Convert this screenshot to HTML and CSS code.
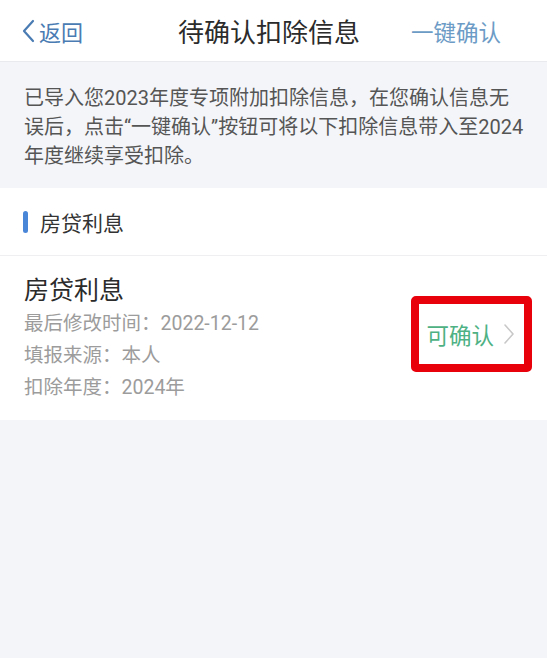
FILE: index.html
```html
<!DOCTYPE html>
<html lang="zh-CN">
<head>
    <meta charset="UTF-8">
    <meta name="viewport" content="width=device-width, initial-scale=1.0">
    <title>待确认扣除信息</title>
    <link rel="stylesheet" href="styles.css">
</head>
<body>
    <!-- Top bar -->
    <div class="nav-bar">
        <a class="nav-back">
            <svg class="back-icon" width="14" height="24" viewBox="0 0 14 24">
                <path d="M12 2 L3 12 L12 22" fill="none" stroke="#4a7cb3" stroke-width="2.2" stroke-linecap="round" stroke-linejoin="round"/>
            </svg>
            <span>返回</span>
        </a>
        <div class="nav-title">待确认扣除信息</div>
        <a class="nav-action">一键确认</a>
    </div>

    <!-- Notice -->
    <div class="notice">
        已导入您2023年度专项附加扣除信息，在您确认信息无误后，点击“一键确认”按钮可将以下扣除信息带入至2024<wbr>年度继续享受扣除。
    </div>

    <!-- Deduction list -->
    <div class="section">
        <div class="section-head">
            <span class="section-bar"></span>
            <span>房贷利息</span>
        </div>
        <div class="item">
            <div class="item-info">
                <div class="item-title">房贷利息</div>
                <div class="item-line">最后修改时间：2022-12-12</div>
                <div class="item-line">填报来源：本人</div>
                <div class="item-line">扣除年度：2024年</div>
            </div>
            <div class="item-status">
                <span class="status-text">可确认</span>
                <svg class="chevron" width="12" height="22" viewBox="0 0 12 22">
                    <path d="M2 2 L10 11 L2 20" fill="none" stroke="#c8c8c8" stroke-width="1.6" stroke-linecap="round" stroke-linejoin="round"/>
                </svg>
            </div>
        </div>
    </div>
</body>
</html>
```

FILE: styles.css
```css
body {
    margin: 0;
    font-family: Roboto, "Noto Sans CJK SC", sans-serif;
    background-color: #f4f5f9;
    color: #333;
}
.nav-bar {
    height: 62px;
    display: flex;
    align-items: center;
    justify-content: space-between;
    padding: 0 46px 0 21px;
    background-color: #fff;
    border-bottom: 1px solid #e9eaee;
    box-sizing: border-box;
}
.nav-back {
    display: flex;
    align-items: center;
    gap: 4px;
    font-size: 22px;
    color: #4a7cb3;
}
.nav-title {
    font-size: 26px;
    color: #2b2b2b;
    margin-left: 44px;
}
.nav-action {
    font-size: 22.5px;
    color: #6c9bc6;
}
.notice {
    padding: 22px 20px 17px 24px;
    font-size: 20px;
    line-height: 29px;
    color: #555;
}
.section {
    background-color: #fff;
}
.section-head {
    height: 67px;
    display: flex;
    align-items: center;
    gap: 12px;
    padding-left: 23px;
    font-size: 21px;
    color: #333;
    border-bottom: 1px solid #efeff2;
}
.section-bar {
    width: 5px;
    height: 22px;
    border-radius: 3px;
    background-color: #4a86d8;
}
.item {
    display: flex;
    align-items: center;
    justify-content: space-between;
    padding: 18px 15px 16px 24px;
}
.item-title {
    font-size: 25px;
    line-height: 34px;
    color: #2b2b2b;
}
.item-line {
    font-size: 19.5px;
    line-height: 32px;
    color: #9c9c9c;
}
.item-status {
    display: flex;
    align-items: center;
    gap: 9px;
    padding: 14px 9px 14px 7px;
    border: 8px solid #e8000b;
    border-radius: 5px;
    margin-bottom: 10px;
}
.status-text {
    font-size: 22.5px;
    color: #4db184;
}
```
